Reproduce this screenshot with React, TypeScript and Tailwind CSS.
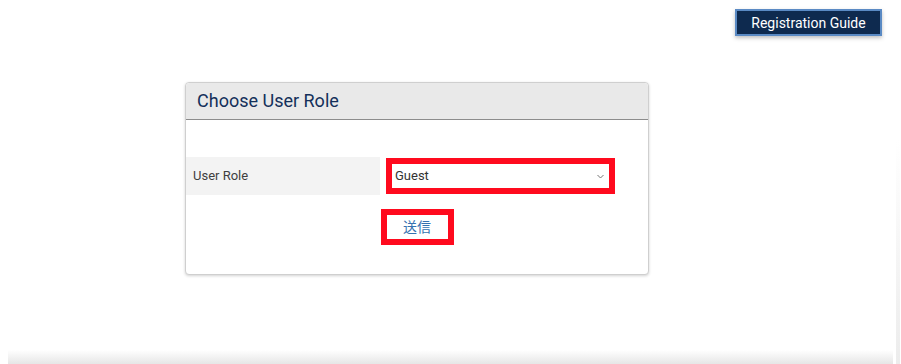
export default function App() {
  return (
    <div className="relative w-[901px] h-[364px] overflow-hidden bg-white flex flex-col font-['Roboto','Noto_Sans_CJK_JP',sans-serif]">
      <div className="flex justify-end pt-[9px] pr-[19px]">
        <button className="h-[27px] w-[147px] bg-[#0e2a4f] border-2 border-[#5a8ac4] text-white text-[14px] leading-none shadow-[0_2px_4px_rgba(0,0,0,0.25)]">
          Registration Guide
        </button>
      </div>

      <div className="ml-[185px] mt-[46px] w-[464px] border border-[#cfcfcf] rounded-[4px] shadow-[0_1px_3px_rgba(0,0,0,0.18)] bg-white">
        <div className="h-[37px] bg-[#e9e9e9] border-b border-[#8c8c8c] rounded-t-[4px] flex items-center px-[11px]">
          <h2 className="text-[18px] text-[#14305a] leading-none">Choose User Role</h2>
        </div>

        <div className="pt-[37px] pb-[29px]">
          <div className="flex items-center">
            <div className="w-[194px] h-[38px] bg-[#f3f3f3] flex items-center pl-[7px] text-[13px] text-[#3f3f3f]">
              User Role
            </div>
            <div className="ml-[6px] w-[229px] h-[36px] border-[6px] border-[#ff0a1e] bg-white flex items-center justify-between pl-[3px] pr-[5px]">
              <span className="text-[13px] text-[#333]">Guest</span>
              <svg width="7" height="5" viewBox="0 0 7 5" className="mt-[1px]">
                <path d="M0.5 1 L3.5 4 L6.5 1" fill="none" stroke="#777" strokeWidth="1" />
              </svg>
            </div>
          </div>

          <div className="flex justify-center mt-[14px]">
            <button className="w-[73px] h-[36px] border-[6px] border-[#ff0a1e] bg-white text-[14px] text-[#3572b0] font-['Noto_Sans_CJK_JP',sans-serif] leading-none pb-[2px]">
              送信
            </button>
          </div>
        </div>
      </div>

      <div className="mt-auto mx-[8px] h-[14px] bg-gradient-to-b from-white to-[#e6e6e6]" />
      <div className="absolute right-[1px] top-[140px] bottom-0 w-[4px] bg-gradient-to-b from-white to-[#ececec]" />
    </div>
  );
}
